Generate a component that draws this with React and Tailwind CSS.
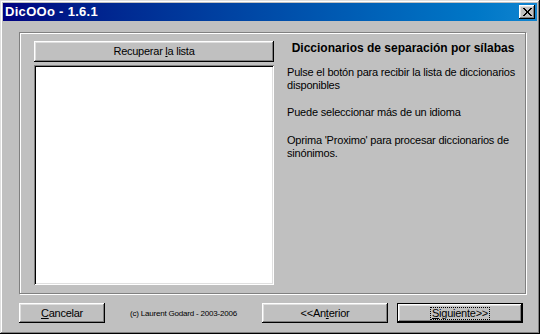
import React from "react";

const font = { fontFamily: '"Liberation Sans", Arial, sans-serif' };

function Btn({ className = "", children, def = false }) {
  return (
    <div
      className={
        "flex items-center justify-center bg-[#c0c0c0] text-[11px] tracking-[-0.25px] text-black " +
        (def
          ? "border border-black shadow-[inset_-1px_-1px_0_#000,inset_1px_1px_0_#fff,inset_-2px_-2px_0_#808080,inset_2px_2px_0_#dfdfdf] "
          : "shadow-[inset_-1px_-1px_0_#000,inset_1px_1px_0_#fff,inset_-2px_-2px_0_#808080,inset_2px_2px_0_#dfdfdf] ") +
        className
      }
    >
      {children}
    </div>
  );
}

export default function App() {
  return (
    <div
      style={font}
      className="w-[540px] h-[334px] bg-[#c0c0c0] p-[3px] flex flex-col shadow-[inset_-1px_-1px_0_#000,inset_1px_1px_0_#dfdfdf,inset_-2px_-2px_0_#808080,inset_2px_2px_0_#fff] leading-[13px]"
    >
      {/* title bar */}
      <div className="h-[18px] flex items-center bg-gradient-to-r from-[#000080] to-[#1084d0] pl-[2px] pr-[2px]">
        <span className="text-white font-bold text-[13px] tracking-[0.3px] leading-[14px]">DicOOo - 1.6.1</span>
        <div className="ml-auto w-[16px] h-[14px] bg-[#c0c0c0] flex items-center justify-center shadow-[inset_-1px_-1px_0_#000,inset_1px_1px_0_#fff,inset_-2px_-2px_0_#808080,inset_2px_2px_0_#dfdfdf]">
          <svg width="9" height="8" viewBox="0 0 9 8" shapeRendering="crispEdges">
            <path
              fill="#000"
              d="M0 0h2v1h-2zM7 0h2v1h-2zM1 1h2v1h-2zM6 1h2v1h-2zM2 2h2v1h-2zM5 2h2v1h-2zM3 3h3v1h-3zM3 4h3v1h-3zM2 5h2v1h-2zM5 5h2v1h-2zM1 6h2v1h-2zM6 6h2v1h-2zM0 7h2v1h-2zM7 7h2v1h-2z"
            />
          </svg>
        </div>
      </div>

      {/* group frame */}
      <div className="mt-[11px] ml-[16px] w-[507px] h-[262px] border border-[#808080] shadow-[1px_1px_0_#fff,inset_1px_1px_0_#fff] flex pl-[14px] pt-[8px]">
        <div className="w-[240px] flex flex-col gap-[3px]">
          <Btn className="h-[21px]">
            <span>
              Recuperar <u>l</u>a lista
            </span>
          </Btn>
          <div className="h-[220px] bg-white shadow-[inset_1px_1px_0_#808080,inset_-1px_-1px_0_#fff,inset_2px_2px_0_#000,inset_-2px_-2px_0_#dfdfdf]" />
        </div>
        <div className="ml-[7px] w-[244px] flex flex-col text-black">
          <div className="text-center font-bold text-[12px] leading-[14px]">
            Diccionarios de separación por sílabas
          </div>
          <div className="pl-[6px] text-[11px] tracking-[-0.2px] whitespace-nowrap">
            <div className="mt-[11px]">
              Pulse el botón para recibir la lista de diccionarios
              <br />
              disponibles
            </div>
            <div className="mt-[14px]">Puede seleccionar más de un idioma</div>
            <div className="mt-[15px]">
              Oprima 'Proximo' para procesar diccionarios de
              <br />
              sinónimos.
            </div>
          </div>
        </div>
      </div>

      {/* bottom row */}
      <div className="mt-[9px] ml-[16px] w-[504px] h-[20px] flex items-center">
        <Btn className="w-[86px] h-[20px]">
          <span>
            <u>C</u>ancelar
          </span>
        </Btn>
        <span className="ml-[25px] text-[8px] tracking-[-0.2px] text-black">
          (c) Laurent Godard - 2003-2006
        </span>
        <Btn className="ml-auto w-[126px] h-[20px]">
          <span>
            &lt;&lt;An<u>t</u>erior
          </span>
        </Btn>
        <Btn def className="ml-[9px] w-[126px] h-[20px]">
          <span className="border border-dotted border-black px-[1px] leading-[11px]">
            <u>S</u>iguiente&gt;&gt;
          </span>
        </Btn>
      </div>
    </div>
  );
}
